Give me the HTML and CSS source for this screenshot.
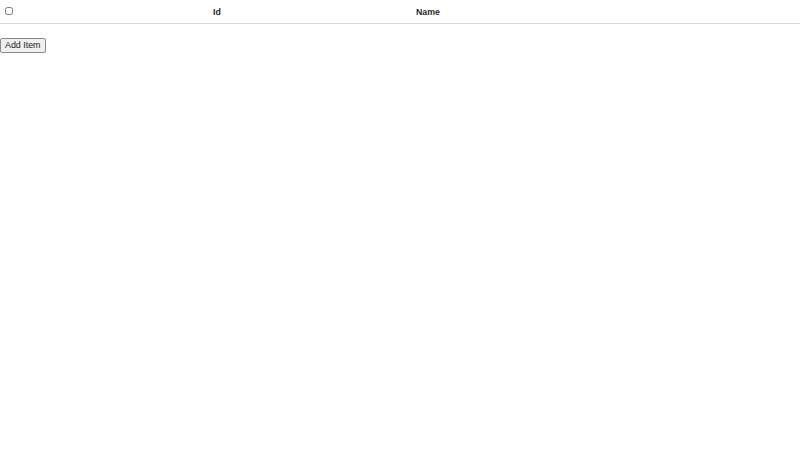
FILE: index.html
```html
<!DOCTYPE html>
<html>
<head>
<meta charset="utf-8">
<link rel="stylesheet" href="styles.css">
</head>
<body>
<table class="grid">
  <thead>
    <tr>
      <th class="col-check"><input type="checkbox" class="check"></th>
      <th class="col-id">Id</th>
      <th class="col-name">Name</th>
      <th class="col-rest"></th>
    </tr>
  </thead>
  <tbody></tbody>
</table>
<button class="add-btn">Add Item</button>
</body>
</html>
```

FILE: styles.css
```css
html, body {
  margin: 0;
  padding: 0;
  background: #fff;
  font-family: "Liberation Sans", Arial, sans-serif;
  color: #2a2a2a;
}
.grid {
  width: 100%;
  border-collapse: collapse;
  table-layout: fixed;
}
.grid th {
  height: 22px;
  padding: 1px 0 0 0;
  font-size: 8.8px;
  font-weight: bold;
  text-align: center;
  vertical-align: middle;
  border-bottom: 1px solid #d6d6d6;
}
.col-check { width: 112px; text-align: left !important; }
.col-id { width: 210px; }
.col-name { width: 212px; }
.check {
  width: 8px;
  height: 8px;
  margin: 0 0 0 5px;
  display: block;
  position: relative;
  top: -1px;
}
.add-btn {
  display: block;
  margin: 14px 0 0 0;
  font-family: "Liberation Sans", Arial, sans-serif;
  font-size: 8.9px;
  line-height: 11px;
  padding: 1px 4px 1px 4px;
  border: 1px solid #8a8a8a;
  border-radius: 2px;
  background: #f0f0f0;
  color: #222;
}
```
